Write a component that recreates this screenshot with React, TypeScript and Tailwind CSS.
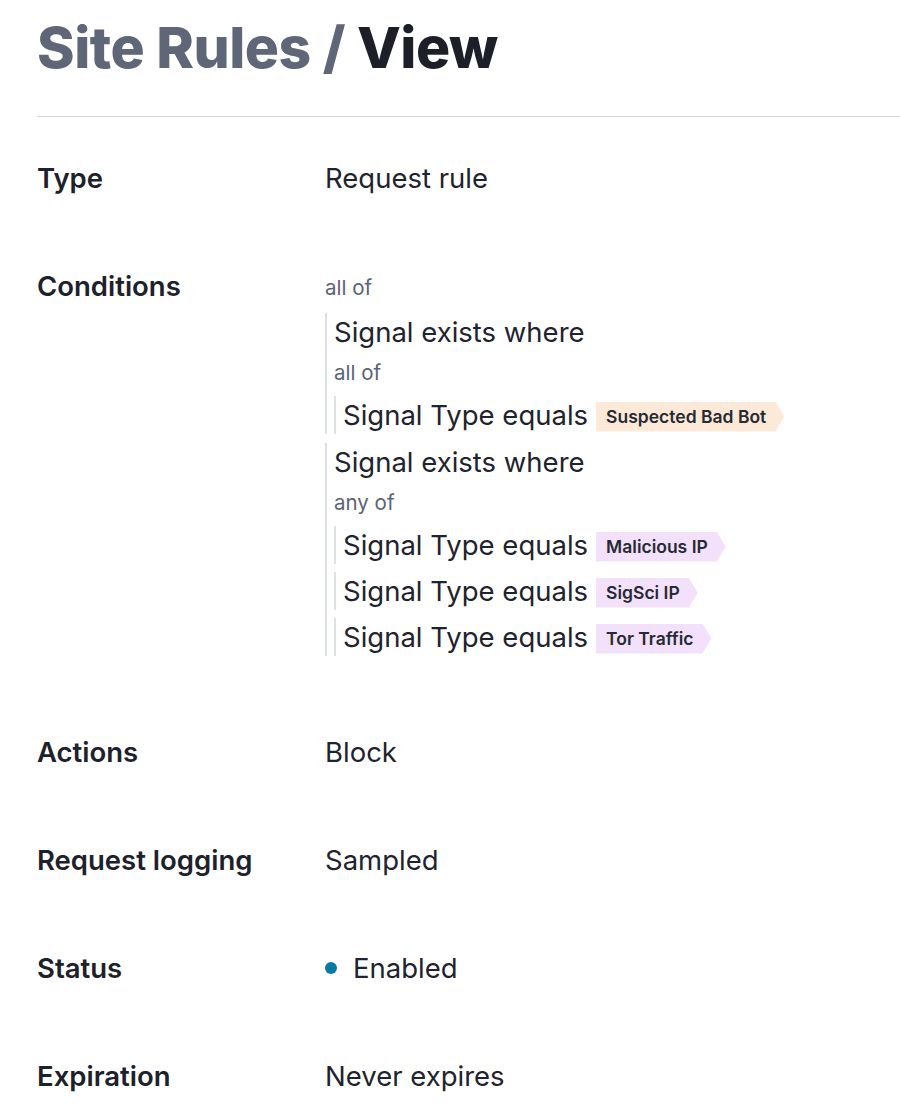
import React from "react";

const tagClip =
  "[clip-path:polygon(0_0,calc(100%_-_9px)_0,100%_50%,calc(100%_-_9px)_100%,0_100%)]";

function Tag({ children, tone }: { children: React.ReactNode; tone: "peach" | "lilac" }) {
  return (
    <span
      className={
        "ml-[8px] mt-[3px] inline-flex h-[30px] items-center pl-[10px] pr-[18px] text-[17.5px] font-semibold leading-none text-[#262a33] " +
        tagClip +
        (tone === "peach" ? " bg-[#fde9d7]" : " bg-[#f3e1fb]")
      }
    >
      {children}
    </span>
  );
}

function Item({ tag, tone }: { tag: string; tone: "peach" | "lilac" }) {
  return (
    <div className="flex h-[38px] items-center border-l-2 border-[#dcdfe4] pl-[7px]">
      <span className="text-[27.5px] leading-[32px] text-[#1f232d]">Signal Type equals</span>
      <Tag tone={tone}>{tag}</Tag>
    </div>
  );
}

function Group({
  op,
  items,
}: {
  op: string;
  items: { tag: string; tone: "peach" | "lilac" }[];
}) {
  return (
    <div className="flex flex-col border-l-2 border-[#dcdfe4] pl-[7px] pt-[3px]">
      <div className="text-[27.5px] leading-[32px] text-[#1f232d]">Signal exists where</div>
      <div className="mb-[7px] mt-[9px] text-[20.5px] leading-[32px] text-[#5b6374]">{op}</div>
      <div className="flex flex-col gap-[8px]">
        {items.map((it, i) => (
          <Item key={i} tag={it.tag} tone={it.tone} />
        ))}
      </div>
    </div>
  );
}

function Row({ label, children }: { label: string; children: React.ReactNode }) {
  return (
    <div className="flex">
      <div className="w-[288px] shrink-0 text-[27.5px] font-semibold leading-[32px] text-[#1d212b]">
        {label}
      </div>
      <div className="min-w-0 flex-1 text-[27.5px] leading-[32px] text-[#1f232d]">{children}</div>
    </div>
  );
}

export default function App() {
  return (
    <div
      className="min-h-[1119px] bg-white pl-[37px] pt-[19px]"
      style={{ fontFamily: "Inter, 'Noto Sans', sans-serif" }}
    >
      <h1 className="text-[57px] font-extrabold leading-[58px] tracking-[-0.5px]">
        <span className="text-[#5e6677]">Site Rules / </span>
        <span className="text-[#1c1f27]">View</span>
      </h1>
      <div className="mt-[39px] h-px bg-[#d5d8dd]" />
      <div className="mt-[45px] flex flex-col gap-[76px]">
        <Row label="Type">Request rule</Row>
        <Row label="Conditions">
          <div className="flex flex-col pb-[4px]">
            <div className="mb-[9px] pt-[2px] text-[20.5px] leading-[32px] text-[#5b6374]">all of</div>
            <div className="flex flex-col gap-[9px]">
              <Group op="all of" items={[{ tag: "Suspected Bad Bot", tone: "peach" }]} />
              <Group
                op="any of"
                items={[
                  { tag: "Malicious IP", tone: "lilac" },
                  { tag: "SigSci IP", tone: "lilac" },
                  { tag: "Tor Traffic", tone: "lilac" },
                ]}
              />
            </div>
          </div>
        </Row>
        <Row label="Actions">Block</Row>
        <Row label="Request logging">Sampled</Row>
        <Row label="Status">
          <div className="flex items-center">
            <span className="h-[12px] w-[12px] rounded-full bg-[#0a7aa3]" />
            <span className="ml-[16px]">Enabled</span>
          </div>
        </Row>
        <Row label="Expiration">Never expires</Row>
      </div>
    </div>
  );
}
